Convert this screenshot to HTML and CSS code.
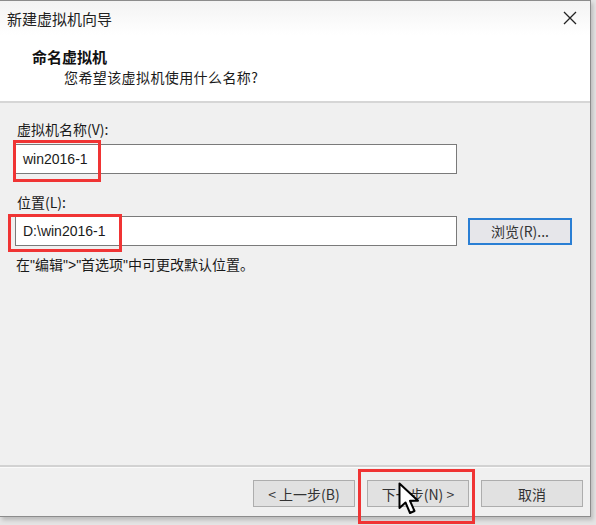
FILE: index.html
```html
<!DOCTYPE html>
<html lang="zh-CN">
<head>
    <meta charset="UTF-8">
    <title>新建虚拟机向导</title>
    <link rel="stylesheet" href="styles.css">
</head>
<body>
    <div class="dialog">
        <div class="titlebar">
            <span class="title">新建虚拟机向导</span>
            <svg class="close" width="14" height="14" viewBox="0 0 14 14">
                <path d="M1 1 L13 13 M13 1 L1 13" stroke="#222" stroke-width="1.3" fill="none"/>
            </svg>
        </div>
        <div class="header">
            <div class="head-title">命名虚拟机</div>
            <div class="head-sub">您希望该虚拟机使用什么名称?</div>
        </div>
        <div class="content">
            <div class="label">虚拟机名称(V):</div>
            <div class="row">
                <div class="field">win2016-1</div>
            </div>
            <div class="label second">位置(L):</div>
            <div class="row">
                <div class="field">D:\win2016-1</div>
                <button class="btn browse">浏览(R)...</button>
            </div>
            <div class="hint">在<span class="q">"</span>编辑<span class="q">"&gt;"</span>首选项<span class="q">"</span>中可更改默认位置。</div>
        </div>
        <div class="footer">
            <button class="btn">&lt; 上一步(B)</button>
            <button class="btn">下一步(N) &gt;</button>
            <button class="btn">取消</button>
        </div>

        <div class="mark mark-name"></div>
        <div class="mark mark-path"></div>
        <div class="mark mark-next"></div>
        <svg class="cursor" width="24" height="36" viewBox="0 0 24 36">
            <path d="M1.5 1.5 L1.5 26 L7.5 20.5 L12 31 L16.5 29 L12 18.8 L20 18.8 Z" fill="#fff" stroke="#000" stroke-width="2" stroke-linejoin="round"/>
        </svg>
    </div>
</body>
</html>
```

FILE: styles.css
```css
* {
    box-sizing: border-box;
}

body {
    margin: 0;
    width: 596px;
    height: 525px;
    background: #e4e4e4;
    font-family: "Noto Sans CJK SC", "Liberation Sans", sans-serif;
    font-size: 14px;
    color: #1a1a1a;
    overflow: hidden;
}

.dialog {
    position: relative;
    width: 591px;
    height: 517px;
    background: #f0f0f0;
    border: 1px solid #8c8c8c;
    border-left: none;
    display: flex;
    flex-direction: column;
    box-shadow: 2px 3px 4px rgba(0, 0, 0, 0.18);
}

.titlebar {
    height: 34px;
    padding: 0 0 0 7px;
    display: flex;
    align-items: center;
    justify-content: space-between;
    background: linear-gradient(#f3f3f3, #ffffff);
}

.title {
    font-size: 15px;
    color: #222;
}

.close {
    margin-right: 13px;
}

.header {
    background: #fff;
    padding: 12px 0 14px 32px;
    border-bottom: 2px solid #d6d6d6;
}

.head-title {
    font-weight: bold;
    font-size: 15px;
    line-height: 20px;
    color: #111;
}

.head-sub {
    margin-left: 32px;
    line-height: 20px;
    font-size: 14px;
    letter-spacing: 0.4px;
}

.content {
    flex: 1;
    padding: 16px 0 0 15px;
    border-bottom: 2px solid #d2d2d2;
}

.label {
    line-height: 20px;
    padding-left: 2px;
    margin-bottom: 5px;
}

.label.second {
    margin-top: 18px;
    margin-bottom: 4px;
}

.row {
    display: flex;
    align-items: center;
    gap: 11px;
}

.field {
    width: 442px;
    height: 30px;
    background: #fff;
    border: 1px solid #7a7a7a;
    padding-left: 7px;
    line-height: 28px;
    font-family: "Liberation Sans", "Noto Sans CJK SC", sans-serif;
    font-size: 14px;
}

.btn {
    height: 27px;
    width: 102px;
    background: #e1e1e1;
    border: 1px solid #adadad;
    font-family: "Noto Sans CJK SC", "Liberation Sans", sans-serif;
    font-size: 14px;
    color: #333;
    padding: 0;
}

.btn.browse {
    width: 104px;
    background: #e6e6ea;
    border: 2px solid #2a7fd4;
}

.hint {
    margin-top: 8px;
    line-height: 20px;
    padding-left: 1px;
}

.q {
    font-family: "Liberation Sans", sans-serif;
}

.footer {
    height: 49px;
    border-top: 1px solid #fafafa;
    display: flex;
    justify-content: flex-end;
    gap: 12px;
    padding: 12px 7px 0 0;
}

.mark {
    position: absolute;
    border: 3px solid #f03434;
}

.mark-name {
    left: 13px;
    top: 139px;
    width: 88px;
    height: 42px;
}

.mark-path {
    left: 8px;
    top: 213px;
    width: 114px;
    height: 38px;
}

.mark-next {
    left: 358px;
    top: 468px;
    width: 117px;
    height: 55px;
}

.cursor {
    position: absolute;
    left: 398px;
    top: 481px;
}
```
